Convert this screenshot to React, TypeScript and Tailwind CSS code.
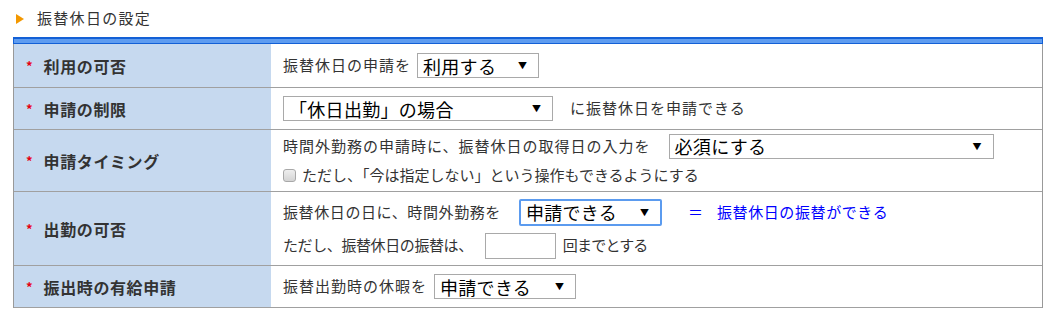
import React from 'react';

const font = { fontFamily: '"Noto Sans CJK JP", "Noto Sans", sans-serif' };

const Select: React.FC<{ label: string; width: string; focus?: boolean }> = ({ label, width, focus }) => (
  <div
    className={`${width} ${focus ? 'h-[27px] border-2 border-[#5b9bef] rounded-[2px]' : 'h-[25px] border border-[#a9a9a9]'} flex items-center justify-between bg-white pl-[5px] pr-[10px] shrink-0`}
  >
    <span className="text-[18px] text-black leading-none tracking-[0.3px]">{label}</span>
    <span className="text-[9px] text-black leading-none">▼</span>
  </div>
);

const Label: React.FC<{ text: string }> = ({ text }) => (
  <div className="bg-[#c6d9ef] flex items-center pl-[12px] gap-[11px]">
    <span className="text-[#e60012] text-[13px] font-bold leading-none">*</span>
    <span className="text-[16px] font-bold text-[#333] tracking-[0.6px]">{text}</span>
  </div>
);

const rows = [
  { label: '利用の可否', h: 'h-[43px]' },
  { label: '申請の制限', h: 'h-[41px]' },
  { label: '申請タイミング', h: 'h-[61px]' },
  { label: '出勤の可否', h: 'h-[73px]' },
  { label: '振出時の有給申請', h: 'h-[41px]' },
];

export default function App() {
  const content = [
    <div className="flex items-center gap-[6px]">
      <span>振替休日の申請を</span>
      <Select label="利用する" width="w-[122px]" />
    </div>,
    <div className="flex items-center gap-[17px]">
      <Select label="「休日出勤」の場合" width="w-[270px]" />
      <span>に振替休日を申請できる</span>
    </div>,
    <div className="flex flex-col gap-[5px] -mt-[1px]">
      <div className="flex items-center gap-[18px]">
        <span>時間外勤務の申請時に、振替休日の取得日の入力を</span>
        <Select label="必須にする" width="w-[325px]" />
      </div>
      <div className="flex items-center gap-[6px]">
        <span className="w-[13px] h-[13px] rounded-[3px] border border-[#a8a8a8] bg-gradient-to-b from-[#eeeeee] to-[#d4d4d4] shrink-0" />
        <span className="tracking-[0px]">ただし、「今は指定しない」という操作もできるようにする</span>
      </div>
    </div>,
    <div className="flex flex-col gap-[7px]">
      <div className="flex items-center">
        <span className="mr-[18px] tracking-[0.6px]">振替休日の日に、時間外勤務を</span>
        <Select label="申請できる" width="w-[143px]" focus />
        <span className="ml-[26px] text-[#0000ff]">＝</span>
        <span className="ml-[13px] text-[#0000ff] tracking-[0.6px]">振替休日の振替ができる</span>
      </div>
      <div className="flex items-center">
        <span className="mr-[12px] tracking-[-0.4px]">ただし、振替休日の振替は、</span>
        <div className="w-[71px] h-[26px] border border-[#a9a9a9] bg-white" />
        <span className="ml-[7px] tracking-[-0.8px]">回までとする</span>
      </div>
    </div>,
    <div className="flex items-center gap-[7px]">
      <span>振替出勤時の休暇を</span>
      <Select label="申請できる" width="w-[142px]" />
    </div>,
  ];

  return (
    <div className="w-[1056px] h-[319px] bg-white" style={font}>
      <div className="h-[37px] flex items-center pl-[16px] gap-[13px]">
        <span className="w-0 h-0 border-y-[5.5px] border-y-transparent border-l-[8px] border-l-[#f39800]" />
        <span className="text-[15px] text-[#333] tracking-[1.3px]">振替休日の設定</span>
      </div>
      <div className="mx-[13px] w-[1030px]">
        <div className="h-[7px] border border-[#1360d6] bg-[#5e9cf0] border-t-2" />
        <div className="border-x border-[#999]">
          {rows.map((r, i) => (
            <div key={i} className="grid grid-cols-[257px_1fr] border-b border-[#a0a0a0]">
              <Label text={r.label} />
              <div className={`${r.h} flex items-center pl-[12px] text-[15px] text-[#333] tracking-[1px]`}>
                {content[i]}
              </div>
            </div>
          ))}
        </div>
      </div>
    </div>
  );
}
